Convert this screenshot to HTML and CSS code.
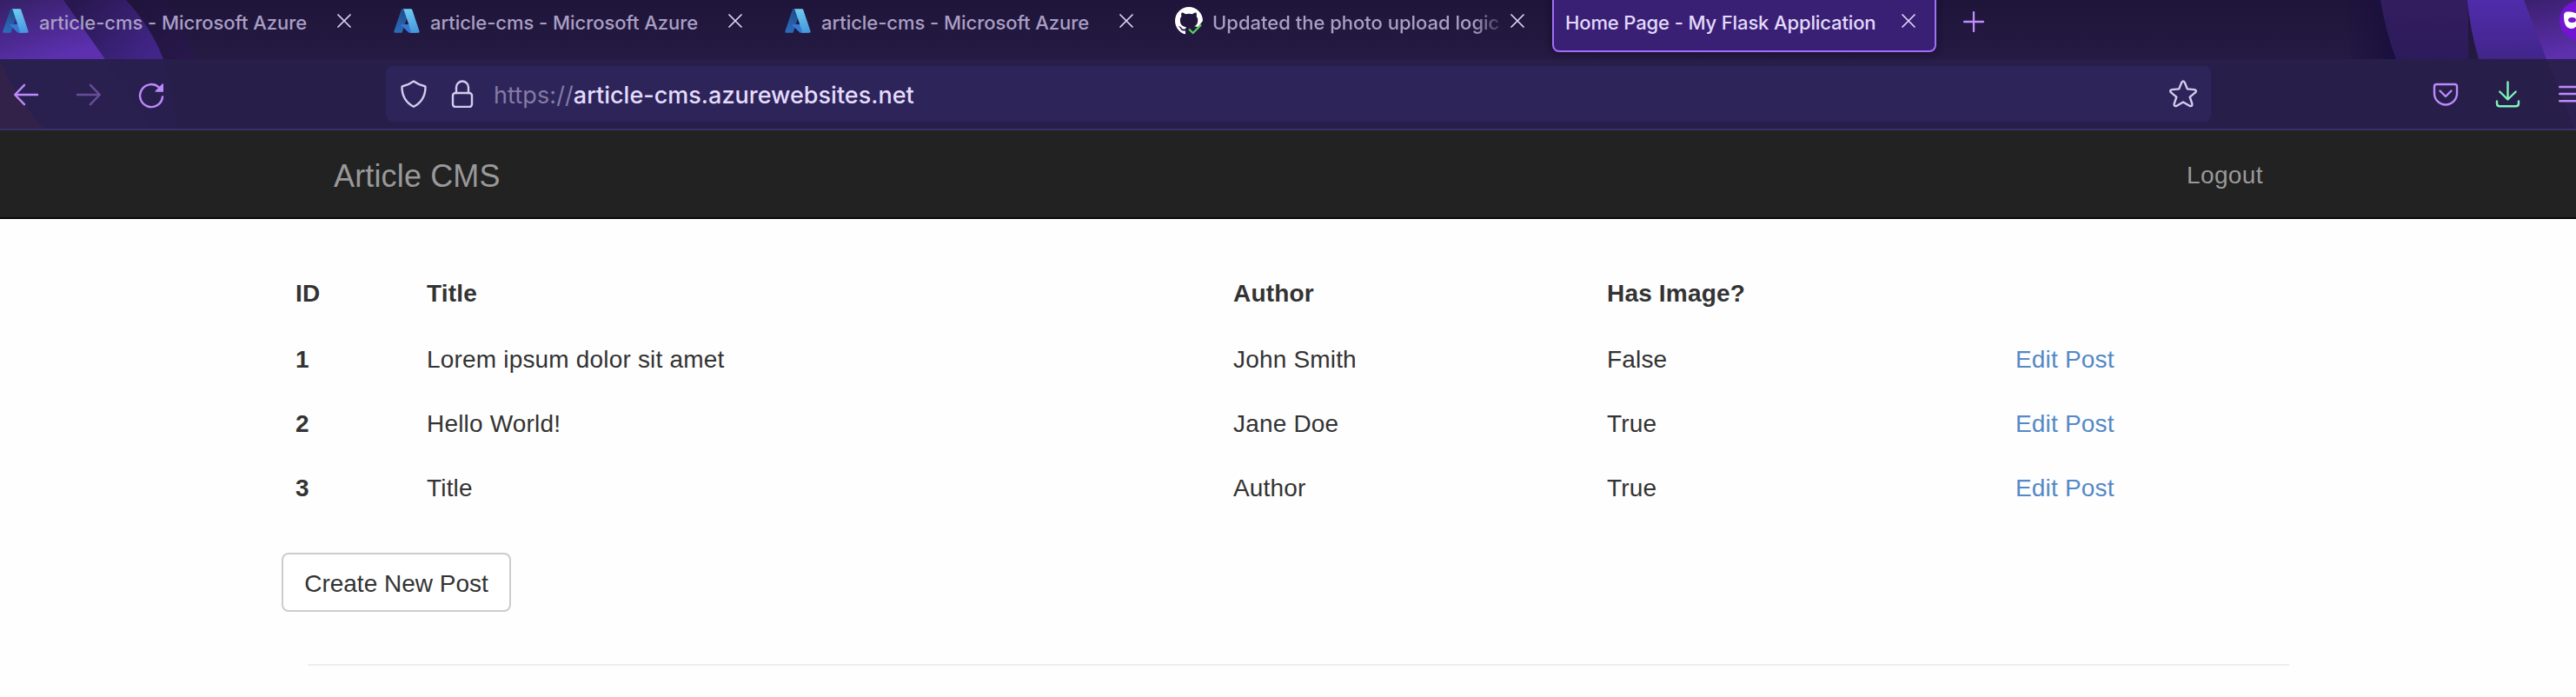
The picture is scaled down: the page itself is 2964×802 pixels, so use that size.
FILE: index.html
```html
<!DOCTYPE html>
<html lang="en">
<head>
<meta charset="utf-8">
<title>Home Page - My Flask Application</title>
<link rel="stylesheet" href="styles.css">
</head>
<body>
<svg class="defs" width="0" height="0" aria-hidden="true">
  <defs>
    <linearGradient id="az1" x1="0.7" y1="0" x2="0.3" y2="1"><stop offset="0" stop-color="#1f4a86"/><stop offset="1" stop-color="#2c6cbc"/></linearGradient>
    <linearGradient id="az2" x1="0.4" y1="0" x2="0.6" y2="1"><stop offset="0" stop-color="#6fcaf0"/><stop offset="1" stop-color="#4797dd"/></linearGradient>
    <symbol id="azure" viewBox="0 0 96 96">
      <path fill="url(#az1)" d="M33.338 6.544h26.038l-27.03 80.087a4.152 4.152 0 0 1-3.933 2.824H8.149a4.145 4.145 0 0 1-3.928-5.47L29.404 9.368a4.152 4.152 0 0 1 3.934-2.825z"/>
      <path fill="#3478d2" d="M71.175 60.261h-41.29a1.911 1.911 0 0 0-1.305 3.309l26.532 24.764a4.171 4.171 0 0 0 2.846 1.121h23.38z"/>
      <path fill="url(#az2)" d="M66.595 9.364a4.145 4.145 0 0 0-3.928-2.82H33.648a4.146 4.146 0 0 1 3.928 2.82l25.184 74.62a4.146 4.146 0 0 1-3.928 5.472h29.02a4.146 4.146 0 0 0 3.927-5.472z"/>
    </symbol>
    <symbol id="close" viewBox="0 0 16 16"><path d="M1 1l14 14M15 1L1 15" fill="none" stroke="currentColor" stroke-width="1.7" stroke-linecap="round"/></symbol>
  </defs>
</svg>

<header class="browser">
  <svg class="wallpaper" viewBox="0 0 2964 148" width="2964" height="148" aria-hidden="true">
    <defs>
      <linearGradient id="base" x1="0" y1="0" x2="0" y2="1"><stop offset="0" stop-color="#1f1439"/><stop offset="1" stop-color="#251a42"/></linearGradient>
      <linearGradient id="l1" gradientUnits="userSpaceOnUse" x1="20" y1="-10" x2="45" y2="72"><stop offset="0" stop-color="#331f62"/><stop offset="1" stop-color="#5c30af"/></linearGradient>
      <linearGradient id="l2" gradientUnits="userSpaceOnUse" x1="90" y1="0" x2="170" y2="68"><stop offset="0" stop-color="#28184f"/><stop offset="1" stop-color="#422589"/></linearGradient>
      <linearGradient id="l3" gradientUnits="userSpaceOnUse" x1="160" y1="0" x2="215" y2="68"><stop offset="0" stop-color="#20143b"/><stop offset="1" stop-color="#27174b"/></linearGradient>
      <linearGradient id="r0" x1="0" y1="0" x2="1" y2="0"><stop offset="0" stop-color="#180f3e" stop-opacity="0"/><stop offset="1" stop-color="#180f3e"/></linearGradient>
      <linearGradient id="r1" x1="0" y1="0" x2="0" y2="1"><stop offset="0" stop-color="#331d5e"/><stop offset="1" stop-color="#2c1b5c"/></linearGradient>
      <linearGradient id="r2" x1="0" y1="0" x2="0" y2="1"><stop offset="0" stop-color="#4f2cab"/><stop offset="1" stop-color="#42258a"/></linearGradient>
      <linearGradient id="r3" x1="0.3" y1="0" x2="0.5" y2="1"><stop offset="0" stop-color="#3c2070"/><stop offset="1" stop-color="#5e30b0"/></linearGradient>
    </defs>
    <rect width="2964" height="68" fill="url(#base)"/>
    <path d="M145 0H190Q210 30 226 68H188Z" fill="url(#l3)"/>
    <path d="M73 0H145Q173 30 188 68H121Z" fill="url(#l2)"/>
    <path d="M0 0H73L121 68H0Z" fill="url(#l1)"/>
    <path d="M2695 0H2739Q2745 36 2757 68H2705Z" fill="url(#r0)"/>
    <path d="M2739 0H2840V68H2757Q2745 36 2739 0Z" fill="url(#r1)"/>
    <path d="M2839 0H2910L2935 68H2852Q2842 34 2839 0Z" fill="url(#r2)"/>
    <path d="M2904 0H2964V68H2930Z" fill="url(#r3)"/>
    <rect y="68" width="2964" height="80" fill="#271e4a"/>
    <path d="M0 68H188Q201 106 204 148H0Z" fill="#291f4f"/>
    <path d="M121 68L175 148H0V68Z" fill="#2a2050"/>
    <path d="M0 70Q18 112 50 148H0Z" fill="#32224a"/>
    <path d="M2930 68H2964V148H2962Z" fill="#2b2050"/>
  </svg>

  <div class="tabs">
    <div class="tab"><svg class="favicon"><use href="#azure"/></svg><span class="label">article-cms - Microsoft Azure</span><svg class="close"><use href="#close"/></svg></div>
    <div class="tab"><svg class="favicon"><use href="#azure"/></svg><span class="label">article-cms - Microsoft Azure</span><svg class="close"><use href="#close"/></svg></div>
    <div class="tab"><svg class="favicon"><use href="#azure"/></svg><span class="label">article-cms - Microsoft Azure</span><svg class="close"><use href="#close"/></svg></div>
    <div class="tab tab-last">
      <svg class="favicon" viewBox="0 0 32 32">
        <clipPath id="ghclip"><path d="M0 0H32V16L26.5 23L21 22L12 26V32H0Z"/></clipPath>
        <g clip-path="url(#ghclip)"><path transform="scale(2)" fill="#fff" d="M8 0C3.58 0 0 3.58 0 8c0 3.54 2.29 6.53 5.47 7.59.4.07.55-.17.55-.38 0-.19-.01-.82-.01-1.49-2.01.37-2.53-.49-2.69-.94-.09-.23-.48-.94-.82-1.13-.28-.15-.68-.52-.01-.53.63-.01 1.08.58 1.23.82.72 1.21 1.87.87 2.33.66.07-.52.28-.87.51-1.07-1.78-.2-3.64-.89-3.64-3.95 0-.87.31-1.59.82-2.15-.08-.2-.36-1.02.08-2.12 0 0 .67-.21 2.2.82.64-.18 1.32-.27 2-.27s1.36.09 2 .27c1.53-1.04 2.2-.82 2.2-.82.44 1.1.16 1.92.08 2.12.51.56.82 1.27.82 2.15 0 3.07-1.87 3.75-3.65 3.95.29.25.54.73.54 1.48 0 1.07-.01 1.93-.01 2.2 0 .21.15.46.55.38A8.01 8.01 0 0 0 16 8c0-4.42-3.58-8-8-8z"/></g>
        <path d="M16 25.5L20.700 30L30 20.500" fill="none" stroke="#55d25c" stroke-width="2.2"/>
      </svg>
      <span class="label label-fade">Updated the photo upload logic</span><svg class="close"><use href="#close"/></svg>
    </div>
    <div class="tab-active"><span class="label-active">Home Page - My Flask Application</span><svg class="close"><use href="#close"/></svg></div>
    <svg class="new-tab" viewBox="0 0 24 24"><path d="M12 1V23M1 12H23" stroke="#bf8cfb" stroke-width="2.300" stroke-linecap="round"/></svg>
    <svg class="account" viewBox="0 0 45 45"><circle cx="22.500" cy="22.500" r="22.500" fill="#7413d3"/><path d="M5 17Q5 12 10 12.500Q15 12 18 14H27Q30 12 35 12.500Q40 12 40 17Q40 32 31 32Q27 32 22.500 26Q18 32 14 32Q5 32 5 17Z" fill="#fff"/><ellipse cx="14.500" cy="22" rx="4.500" ry="3" fill="#7413d3"/><ellipse cx="30.500" cy="22" rx="4.500" ry="3" fill="#7413d3"/></svg>
  </div>

  <div class="toolbar">
    <div class="nav-icons">
      <svg class="ico" viewBox="0 0 32 32"><path d="M29 16H3.500M14 4.800L3.200 16L14 27.200" /></svg>
      <svg class="ico ico-dim" viewBox="0 0 32 32"><path d="M3 16H28.500M18 4.800L28.800 16L18 27.200"/></svg>
      <svg class="ico" viewBox="0 0 32 32"><path d="M29 18.500A13 13 0 1 1 24.500 7.200"/><path class="solid" d="M30 3.200V12.800H20.800Q20.300 12 21 11.300L29 3.300Z"/></svg>
    </div>
    <div class="urlbar">
      <svg class="ico ico-light" viewBox="0 0 32 32"><path d="M16 1.400Q9.500 6 3.200 7.200Q2.400 7.500 2.500 8.500C2.600 19 7 26 16 30.800C25 26 29.400 19 29.500 8.500Q29.600 7.500 28.800 7.200Q22.500 6 16 1.400Z"/></svg>
      <svg class="ico ico-light lock" viewBox="0 0 32 32"><rect x="5" y="15" width="22" height="16" rx="3"/><path d="M9 15V8.500A7 7 0 0 1 23 8.500V15"/></svg>
      <span class="url"><span class="scheme">https://</span>article-cms.azurewebsites.net</span>
      <svg class="ico ico-light star" viewBox="0 0 32 32"><path d="M14.300 2.800Q16 0 17.700 2.800L20.800 10.400L29 11.100Q32 12 30 14.400L23.700 19.700L26.300 27.500Q26.700 30.700 23.800 30L16 25.500L8.200 30Q5.300 30.700 5.700 27.500L8.300 19.700L2 14.400Q0 12 3 11.100L11.200 10.400Z"/></svg>
    </div>
    <div class="tool-icons">
      <svg class="ico" viewBox="0 0 32 32"><path d="M5.500 4H26.500Q29 4 29 6.500V14.500A13 13 0 0 1 3 14.500V6.500Q3 4 5.500 4Z"/><path d="M9.500 11.500L16 18L22.500 11.500"/></svg>
      <svg class="ico ico-green" viewBox="0 0 32 32"><path d="M15.500 1.500V21M6.300 12.500L15.500 21.500L24.700 12.500M3 23.500V26Q3 29.300 6.300 29.300H24.700Q28 29.300 28 26V23.500"/></svg>
      <svg class="ico" viewBox="0 0 32 32"><path d="M3.200 7H28.800M3.200 15H28.800M3.200 23.200H28.800"/></svg>
    </div>
  </div>
</header>

<nav class="navbar">
  <a class="brand">Article CMS</a>
  <a class="logout">Logout</a>
</nav>

<main class="content">
  <div class="posts">
    <div class="row row-head"><b>ID</b><b>Title</b><b>Author</b><b>Has Image?</b></div>
    <div class="row"><b>1</b><span>Lorem ipsum dolor sit amet</span><span>John Smith</span><span>False</span><a>Edit Post</a></div>
    <div class="row"><b>2</b><span>Hello World!</span><span>Jane Doe</span><span>True</span><a>Edit Post</a></div>
    <div class="row"><b>3</b><span>Title</span><span>Author</span><span>True</span><a>Edit Post</a></div>
  </div>
  <button class="btn">Create New Post</button>
  <hr class="rule">
</main>
</body>
</html>
```
FILE: styles.css
```css
* { box-sizing: border-box; }
html, body { margin: 0; height: 802px; overflow: hidden; }
body {
  width: 2964px;
  background: #fefefe;
  color: #333;
  font: 28px/40px "Liberation Sans", Arial, sans-serif;
}
svg { flex: none; display: block; }
.defs { position: absolute; }

/* Browser chrome */
.browser {
  position: relative;
  height: 150px;
  overflow: hidden;
  border-bottom: 2px solid #3a3069;
  font-family: Inter, sans-serif;
}
.wallpaper { position: absolute; top: 0; left: 0; }
.tabs { position: relative; display: flex; height: 68px; }
.tab {
  flex: none;
  display: flex;
  align-items: center;
  width: 450px;
  height: 48px;
  padding-left: 2px;
}
.tab-last { width: 436px; }
.favicon { width: 32px; height: 32px; margin-right: 11px; }
.label, .label-active {
  flex: none;
  font-size: 22px;
  font-weight: 500;
  line-height: 32px;
  letter-spacing: -.05px;
  white-space: nowrap;
  color: #a99fc4;
  padding-top: 4px;
}
.label { width: 331px; margin-right: 12px; overflow: hidden; }
.label-fade {
  letter-spacing: 0;
  -webkit-mask-image: linear-gradient(90deg, #000 300px, transparent 341px);
  mask-image: linear-gradient(90deg, #000 300px, transparent 341px);
}
.close { width: 16px; height: 16px; color: #ded5f5; }
.tab-active {
  flex: none;
  display: flex;
  align-items: center;
  width: 442px;
  height: 60px;
  padding: 0 22px 10px 13px;
  justify-content: space-between;
  background: #3a2075;
  border: 2px solid #a26ffa;
  border-top: 0;
  border-radius: 0 0 8px 8px;
  box-shadow: 0 0 8px rgba(10, 5, 30, .6);
}
.label-active { color: #e3dafb; letter-spacing: -.13px; }
.new-tab { width: 24px; height: 24px; margin: 13px 0 0 31px; }
.account { width: 45px; height: 45px; margin: 1px 0 0 662px; }

.toolbar { position: relative; display: flex; height: 80px; padding: 8px 0 0 14px; }
.nav-icons, .tool-icons { flex: none; display: flex; gap: 40px; padding-top: 17px; }
.ico {
  width: 32px;
  height: 32px;
  fill: none;
  stroke: #bd8afc;
  stroke-width: 2.4;
  stroke-linecap: round;
  stroke-linejoin: round;
}
.solid { fill: #bd8afc; stroke: none; }
.ico-dim { opacity: .42; }
.ico-light { stroke: #d5cbf0; }
.ico-green { stroke: #7df5b9; }
.urlbar {
  flex: none;
  display: flex;
  align-items: center;
  width: 2100px;
  height: 64px;
  margin-left: 254px;
  padding: 0 16px;
  background: #2d2459;
  border-radius: 8px;
}
.lock { margin-left: 24px; }
.url { margin-left: 20px; font-size: 27px; font-weight: 500; color: #e5dcfd; padding-top: 4px; }
.scheme { color: #857ba5; font-weight: 400; letter-spacing: .1px; }
.star { margin-left: auto; }
.tool-icons { margin-left: 254px; }

/* Page */
.navbar {
  display: flex;
  justify-content: space-between;
  align-items: center;
  height: 102px;
  padding: 0 360px 0 384px;
  background: #222;
  border-bottom: 2px solid #080808;
  color: #999;
}
.brand { font-size: 36px; padding-top: 5px; letter-spacing: .15px; }
.logout { padding-top: 4px; letter-spacing: .4px; }
.content { padding: 49px 0 0 324px; }
.posts { width: 2340px; }
.row {
  display: grid;
  grid-template-columns: 151px 928px 430px 470px 345px;
  padding: 17px 0 17px 16px;
  letter-spacing: .18px;
}
.row-head { padding-bottom: 19px; }
.row a { color: #5489c6; }
.btn {
  display: block;
  width: 264px;
  height: 68px;
  margin-top: 37px;
  padding: 3px 0 0;
  background: #fff;
  border: 2px solid #ccc;
  border-radius: 8px;
  color: #333;
  font: inherit;
  white-space: nowrap;
}
.rule { width: 2280px; height: 2px; margin: 60px 0 0 30px; border: 0; background: #ededed; }
```
